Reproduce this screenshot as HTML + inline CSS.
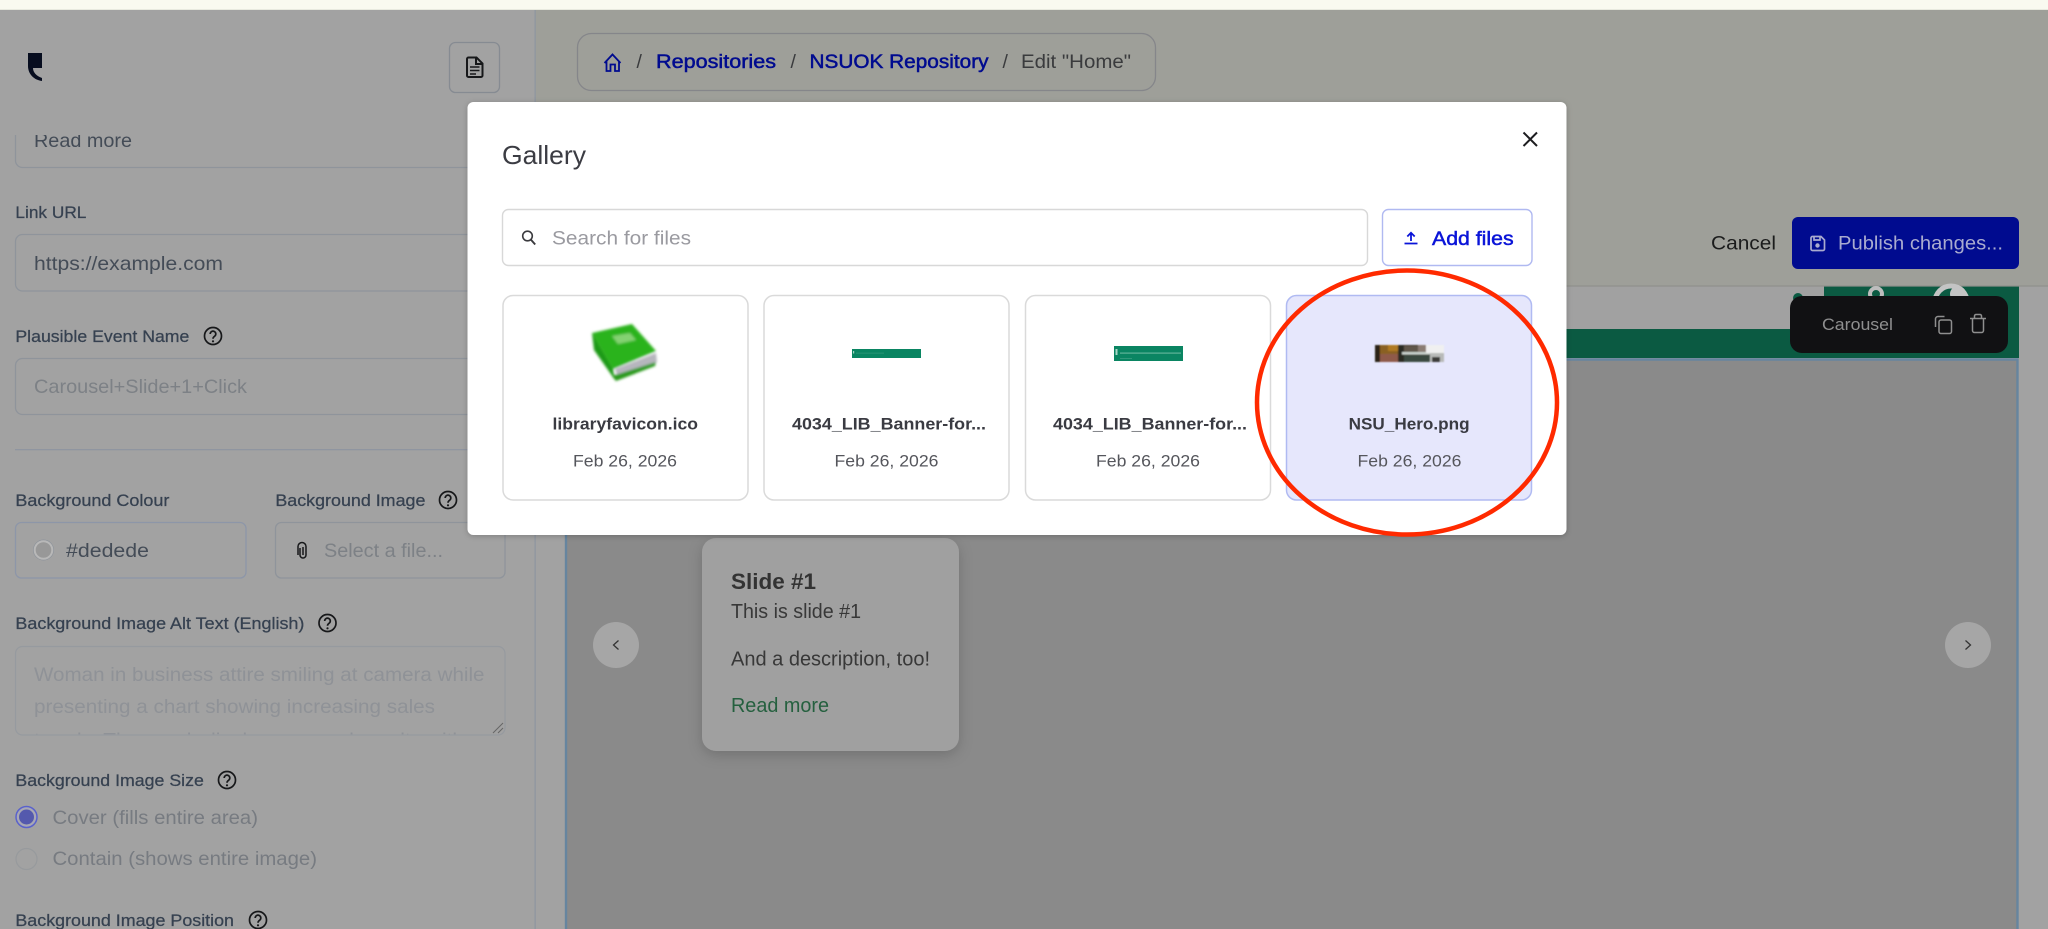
<!DOCTYPE html>
<html lang="en">
<head>
<meta charset="utf-8">
<title>Gallery</title>
<style>
html,body{margin:0;padding:0;background:#a2a2a2;overflow:hidden}
svg{display:block}
text{font-family:"Liberation Sans",Arial,sans-serif}
.lb{font-size:17px;fill:#364150;stroke:#364150;stroke-width:.25}
.in{font-size:19.500px;fill:#444c57}
.ph{font-size:19.500px;fill:#7d8186}
.ph2{font-size:19.500px;fill:#8f9297}
.rd{font-size:19.500px;fill:#777b81}
.bc{font-size:19.500px;fill:#000b8f;stroke:#000b8f;stroke-width:.5}
.sl{font-size:19.500px;fill:#3a3b3d}
.fn{font-size:16.500px;font-weight:bold;fill:#3a3b42}
.dt{font-size:17px;fill:#55565c}
.bx{fill:none;stroke:#8f949b;stroke-width:1.300}
.h{fill:none;stroke:#17181a;stroke-width:1.700}
</style>
</head>
<body>
<svg xmlns="http://www.w3.org/2000/svg" width="2048" height="929" viewBox="0 0 2048 929">
<defs>
<clipPath id="sb"><rect x="0" y="135" width="535" height="794"/></clipPath>
<clipPath id="ta"><rect x="15" y="646" width="490" height="89"/></clipPath>
<filter id="b1" x="-20%" y="-20%" width="140%" height="140%"><feGaussianBlur stdDeviation="1.400"/></filter>
<filter id="b2" x="-10%" y="-10%" width="120%" height="120%"><feGaussianBlur stdDeviation=".7"/></filter>
<filter id="sh" x="-20%" y="-20%" width="140%" height="140%"><feDropShadow dx="0" dy="4" stdDeviation="7" flood-color="#000" flood-opacity=".18"/></filter>
<filter id="sm" x="-5%" y="-5%" width="110%" height="110%"><feDropShadow dx="0" dy="1" stdDeviation="3" flood-color="#000" flood-opacity=".22"/></filter>
</defs>

<!-- page backgrounds -->
<rect width="2048" height="929" fill="#a2a2a2"/>
<rect x="535" y="10" width="1513" height="276" fill="#9e9f99"/>
<rect x="0" y="0" width="2048" height="10" fill="#f9faf0"/>
<rect x="0" y="9" width="2048" height="1" fill="#e8eadf"/>
<rect x="534.500" y="10" width="1.200" height="919" fill="#8d95a0"/>

<!-- main preview -->
<rect x="536" y="286" width="1512" height="643" fill="#a2a2a2"/>
<rect x="566" y="286" width="1258" height="43" fill="#a1a1a1"/>
<rect x="1824" y="286" width="195" height="43" fill="#0b5a42"/>
<rect x="566" y="329" width="1453" height="29" fill="#0b5a42"/>
<rect x="535" y="285.400" width="1513" height="1.200" fill="#8f908c"/>
<circle cx="1798" cy="298" r="5" fill="#0b5a42"/>
<circle cx="1876" cy="294" r="6" fill="none" stroke="#bdbdbd" stroke-width="4"/>
<circle cx="1951" cy="302" r="16" fill="none" stroke="#c4c4c4" stroke-width="5"/>
<circle cx="1958" cy="294" r="8" fill="#c4c4c4"/>
<rect x="566" y="359" width="1452" height="570" fill="#8a8a8a"/>
<path d="M566 929V359.500H2017.500V929" fill="none" stroke="#66859f" stroke-width="2.400"/>

<!-- slide card -->
<rect x="702" y="538" width="257" height="213" rx="14" fill="#a0a0a0" filter="url(#sh)"/>
<text x="731" y="589" font-size="22" font-weight="bold" fill="#333" textLength="85" lengthAdjust="spacingAndGlyphs">Slide #1</text>
<text x="731" y="618" font-size="20" fill="#383838" textLength="130" lengthAdjust="spacingAndGlyphs">This is slide #1</text>
<text x="731" y="665.500" font-size="20" fill="#383838" textLength="199" lengthAdjust="spacingAndGlyphs">And a description, too!</text>
<text x="731" y="712" font-size="20" fill="#25603f" textLength="98" lengthAdjust="spacingAndGlyphs">Read more</text>
<circle cx="616" cy="645" r="23" fill="#a6a6a6"/>
<path d="M618.500 640.500l-5 4.500 5 4.500" fill="none" stroke="#333" stroke-width="1.300"/>
<circle cx="1968" cy="645" r="23" fill="#a6a6a6"/>
<path d="M1965.500 640.500l5 4.500-5 4.500" fill="none" stroke="#333" stroke-width="1.300"/>

<!-- toolbar -->
<rect x="1790" y="296" width="218" height="57" rx="12" fill="#111113"/>
<text x="1822" y="330" font-size="17" fill="#8f8f8f" textLength="71" lengthAdjust="spacingAndGlyphs">Carousel</text>
<g fill="none" stroke="#8f8f8f" stroke-width="1.500">
<rect x="1939" y="320" width="12.500" height="13.500" rx="2"/>
<path d="M1935.500 327v-8a2.500 2.500 0 0 1 2.500-2.500h6.500"/>
<path d="M1970 318.500h16M1974.500 318v-2a1.500 1.500 0 0 1 1.500-1.500h4a1.500 1.500 0 0 1 1.500 1.500v2M1972.500 319v11.500a2 2 0 0 0 2 2h7a2 2 0 0 0 2-2V319"/>
</g>

<!-- header -->
<rect x="577.500" y="33.500" width="578" height="57" rx="14" fill="none" stroke="#85868a" stroke-width="1.300"/>
<path d="M604.500 63l8-8.500 8 8.500M606.500 61v10h4v-6.500h4.500V71h4V61" fill="none" stroke="#000b8f" stroke-width="1.800"/>
<text x="636.500" y="68" class="sl">/</text>
<text x="656" y="68" class="bc" textLength="120" lengthAdjust="spacingAndGlyphs">Repositories</text>
<text x="790.500" y="68" class="sl">/</text>
<text x="809.500" y="68" class="bc" textLength="179" lengthAdjust="spacingAndGlyphs">NSUOK Repository</text>
<text x="1002.500" y="68" class="sl">/</text>
<text x="1021" y="68" class="sl" textLength="110" lengthAdjust="spacingAndGlyphs">Edit "Home"</text>

<text x="1711" y="249.500" font-size="19.500" fill="#1b1c1c" textLength="65" lengthAdjust="spacingAndGlyphs">Cancel</text>
<rect x="1792" y="217" width="227" height="52" rx="6" fill="#000b8f"/>
<g fill="none" stroke="#a9abcf" stroke-width="1.700">
<path d="M1811 238a1.500 1.500 0 0 1 1.500-1.500h8.500l3.500 3.500v9a1.500 1.500 0 0 1-1.500 1.500h-10.500a1.500 1.500 0 0 1-1.500-1.500z"/>
<path d="M1814 236.500v3.500h6v-3.500"/>
</g>
<circle cx="1817.500" cy="245.500" r="2.200" fill="#a9abcf"/>
<text x="1838" y="249.500" font-size="19.500" fill="#a9abcf" textLength="165" lengthAdjust="spacingAndGlyphs">Publish changes...</text>

<!-- sidebar -->
<rect x="0" y="10" width="534" height="125" fill="#a2a2a2"/>
<path d="M28 53H42V68H33C33 72 36 76 42 78V81C34 80 28 74 28 66Z" fill="#070d1f"/>
<rect x="449.500" y="42.500" width="50" height="50" rx="6" fill="none" stroke="#868b92" stroke-width="1.300"/>
<path d="M467 59a1.500 1.500 0 0 1 1.500-1.500h8l6 6v12a1.500 1.500 0 0 1-1.500 1.500h-12.500a1.500 1.500 0 0 1-1.500-1.500zM476 58v6h6" fill="none" stroke="#17181a" stroke-width="2"/>
<path d="M470 67h9.500M470 70.500h9.500M470 74h6" stroke="#17181a" stroke-width="1.600"/>

<g clip-path="url(#sb)">
<rect class="bx" x="15.500" y="110" width="489.500" height="57.500" rx="7"/>
<text class="in" x="34" y="147" textLength="98" lengthAdjust="spacingAndGlyphs">Read more</text>
</g>

<text class="lb" x="15.400" y="218" textLength="71" lengthAdjust="spacingAndGlyphs">Link URL</text>
<rect class="bx" x="15.500" y="234.500" width="489.500" height="56.500" rx="7"/>
<text class="in" x="34" y="270" textLength="189" lengthAdjust="spacingAndGlyphs">https://example.com</text>

<text class="lb" x="15.400" y="342" textLength="174" lengthAdjust="spacingAndGlyphs">Plausible Event Name</text>
<g transform="translate(213 336)"><circle class="h" r="8.500"/><path class="h" d="M-2.800-2a2.800 2.800 0 1 1 4.300 2.300C.5 1 0 1.500 0 2.800"/><circle cy="5.300" r="1.100" fill="#17181a"/></g>
<rect class="bx" x="15.500" y="358.500" width="489.500" height="56" rx="7"/>
<text class="ph" x="34" y="393" textLength="213" lengthAdjust="spacingAndGlyphs">Carousel+Slide+1+Click</text>

<rect x="15" y="449" width="505" height="1.300" fill="#8f95a0"/>

<text class="lb" x="15.400" y="506" textLength="154" lengthAdjust="spacingAndGlyphs">Background Colour</text>
<text class="lb" x="275.400" y="506" textLength="150" lengthAdjust="spacingAndGlyphs">Background Image</text>
<g transform="translate(448 500)"><circle class="h" r="8.500"/><path class="h" d="M-2.800-2a2.800 2.800 0 1 1 4.300 2.300C.5 1 0 1.500 0 2.800"/><circle cy="5.300" r="1.100" fill="#17181a"/></g>
<rect x="15.500" y="522.500" width="230.500" height="55.500" rx="6" fill="none" stroke="#8d96a8" stroke-width="1.300"/>
<circle cx="43.500" cy="550" r="8.800" fill="#989898" stroke="#b8b8b8" stroke-width="2"/>
<circle cx="43.500" cy="550" r="10.200" fill="none" stroke="#8e949c" stroke-width=".6"/>
<text class="in" x="66" y="557" textLength="83" lengthAdjust="spacingAndGlyphs">#dedede</text>
<rect class="bx" x="275.500" y="522.500" width="229.500" height="55.500" rx="6"/>
<path d="M300 548v7a3 3 0 0 0 6 0v-8.500a4 4 0 0 0-8 0V555M303 547v8" fill="none" stroke="#17181a" stroke-width="1.500"/>
<text class="ph" x="324" y="557" textLength="119" lengthAdjust="spacingAndGlyphs">Select a file...</text>

<text class="lb" x="15.400" y="629" textLength="289" lengthAdjust="spacingAndGlyphs">Background Image Alt Text (English)</text>
<g transform="translate(327.500 623)"><circle class="h" r="8.500"/><path class="h" d="M-2.800-2a2.800 2.800 0 1 1 4.300 2.300C.5 1 0 1.500 0 2.800"/><circle cy="5.300" r="1.100" fill="#17181a"/></g>
<g clip-path="url(#ta)">
<text class="ph2" x="34" y="681" textLength="450.500" lengthAdjust="spacingAndGlyphs">Woman in business attire smiling at camera while</text>
<text class="ph2" x="34" y="713" textLength="401" lengthAdjust="spacingAndGlyphs">presenting a chart showing increasing sales</text>
<text class="ph2" x="34" y="746.500" textLength="430" lengthAdjust="spacingAndGlyphs">trends. The graph displays upward results with</text>
</g>
<rect x="15.500" y="646.500" width="489.500" height="88.500" rx="7" fill="none" stroke="#969a9f" stroke-width="1.200"/>
<path d="M493 733l10-10M498 733l5-5" stroke="#666" stroke-width="1"/>

<text class="lb" x="15.400" y="786" textLength="188.500" lengthAdjust="spacingAndGlyphs">Background Image Size</text>
<g transform="translate(227 780)"><circle class="h" r="8.500"/><path class="h" d="M-2.800-2a2.800 2.800 0 1 1 4.300 2.300C.5 1 0 1.500 0 2.800"/><circle cy="5.300" r="1.100" fill="#17181a"/></g>
<circle cx="26.500" cy="817" r="10.500" fill="#a8a8b4" stroke="#5a62cc" stroke-width="1.500"/>
<circle cx="26.500" cy="817" r="7.500" fill="#5459ad"/>
<text class="rd" x="52.500" y="824" textLength="205.500" lengthAdjust="spacingAndGlyphs">Cover (fills entire area)</text>
<circle cx="26.500" cy="859" r="10.500" fill="none" stroke="#979a9d" stroke-width="1.200"/>
<text class="rd" x="52.500" y="865" textLength="264.500" lengthAdjust="spacingAndGlyphs">Contain (shows entire image)</text>

<text class="lb" x="15.400" y="926" textLength="218.600" lengthAdjust="spacingAndGlyphs">Background Image Position</text>
<g transform="translate(258 920)"><circle class="h" r="8.500"/><path class="h" d="M-2.800-2a2.800 2.800 0 1 1 4.300 2.300C.5 1 0 1.500 0 2.800"/><circle cy="5.300" r="1.100" fill="#17181a"/></g>

<!-- modal -->
<rect x="467.500" y="102" width="1099" height="433" rx="6" fill="#fff" filter="url(#sm)"/>
<text x="502" y="164" font-size="26" fill="#3b3c43" textLength="84" lengthAdjust="spacingAndGlyphs">Gallery</text>
<path d="M1523.500 132.500l13.500 13.500M1537 132.500l-13.500 13.500" stroke="#1d1d20" stroke-width="2" fill="none"/>

<rect x="502.500" y="209.500" width="865" height="56" rx="6" fill="#fff" stroke="#d8d8d8" stroke-width="1.400"/>
<circle cx="527.500" cy="236" r="4.800" fill="none" stroke="#3a3a3e" stroke-width="1.600"/>
<path d="M531 239.800l4.200 4.700" stroke="#3a3a3e" stroke-width="1.900"/>
<text x="552" y="244.500" font-size="19.500" fill="#9a9aa0" textLength="139" lengthAdjust="spacingAndGlyphs">Search for files</text>

<rect x="1382.500" y="209.500" width="149.500" height="56" rx="6" fill="#fff" stroke="#b0b9f1" stroke-width="1.400"/>
<path d="M1411 241v-8M1407.300 236.500l3.700-3.700 3.700 3.700M1404.500 243.500h13" fill="none" stroke="#0a14d8" stroke-width="1.800"/>
<text x="1432" y="245" font-size="19.500" fill="#0a14d8" stroke="#0a14d8" stroke-width=".5" textLength="81.600" lengthAdjust="spacingAndGlyphs">Add files</text>

<!-- cards -->
<rect x="503" y="295.500" width="245" height="204.500" rx="10" fill="#fff" stroke="#dadada" stroke-width="1.500"/>
<rect x="764" y="295.500" width="245" height="204.500" rx="10" fill="#fff" stroke="#dadada" stroke-width="1.500"/>
<rect x="1025.500" y="295.500" width="245" height="204.500" rx="10" fill="#fff" stroke="#dadada" stroke-width="1.500"/>
<rect x="1286.500" y="295.500" width="245" height="204.500" rx="10" fill="#e6e7fc" stroke="#b0baf2" stroke-width="1.500"/>

<!-- book thumb -->
<g filter="url(#b1)">
<polygon points="592,333 632,324 656,351 613,369" fill="#2cb31a"/>
<polygon points="592,333 613,369 615,380 594,350" fill="#1f9a12"/>
<polygon points="615,369 656,353 657,362 617,375" fill="#b6b6bd"/>
<polygon points="612,376 656,362 655,366 616,381" fill="#2a9a1a"/>
<polygon points="612,336 630,333 636,340 618,344" fill="#84d272"/>
</g>

<!-- banner thumbs -->
<rect x="852" y="349" width="69" height="9" fill="#0a8562"/>
<rect x="853" y="351" width="1.200" height="2.500" fill="#9fd2c0"/>
<rect x="856" y="352.800" width="28" height=".6" fill="#3a9d80"/>
<rect x="1114" y="346" width="69" height="15" fill="#0a8562"/>
<rect x="1115.500" y="349" width="2" height="6" fill="#a8d6c6"/>
<rect x="1120" y="352.500" width="61" height="1.200" fill="#5fb49a"/>
<rect x="1120" y="358" width="12" height=".8" fill="#3a9d80"/>

<!-- hero thumb -->
<g filter="url(#b2)">
<rect x="1375" y="345" width="69" height="17" fill="#3f3428"/>
<rect x="1375" y="345" width="5" height="17" fill="#2a2416"/>
<rect x="1380" y="345" width="18" height="9" fill="#8a6020"/>
<rect x="1380" y="354" width="18" height="8" fill="#8f5a48"/>
<rect x="1388" y="345" width="12" height="6" fill="#b07a20"/>
<rect x="1398" y="345" width="6" height="17" fill="#2c2a20"/>
<rect x="1404" y="346" width="14" height="6" fill="#60564a"/>
<rect x="1402" y="352" width="38" height="2.500" fill="#c8d0cb"/>
<rect x="1404" y="355" width="26" height="7" fill="#3a4840"/>
<rect x="1418" y="345" width="8" height="7" fill="#8a7c72"/>
<rect x="1426" y="345" width="18" height="8" fill="#f0f0f0"/>
<rect x="1430" y="353" width="14" height="9" fill="#b8bab8"/>
<rect x="1432" y="357" width="8" height="5" fill="#3a3a38"/>
</g>

<!-- file labels -->
<text class="fn" x="552.500" y="429.700" textLength="145.500" lengthAdjust="spacingAndGlyphs">libraryfavicon.ico</text>
<text class="dt" x="573" y="466.700" textLength="104" lengthAdjust="spacingAndGlyphs">Feb 26, 2026</text>
<text class="fn" x="792" y="429.700" textLength="194" lengthAdjust="spacingAndGlyphs">4034_LIB_Banner-for...</text>
<text class="dt" x="834.500" y="466.700" textLength="104" lengthAdjust="spacingAndGlyphs">Feb 26, 2026</text>
<text class="fn" x="1053" y="429.700" textLength="194" lengthAdjust="spacingAndGlyphs">4034_LIB_Banner-for...</text>
<text class="dt" x="1096" y="466.700" textLength="104" lengthAdjust="spacingAndGlyphs">Feb 26, 2026</text>
<text class="fn" x="1348.600" y="429.700" textLength="121" lengthAdjust="spacingAndGlyphs">NSU_Hero.png</text>
<text class="dt" x="1357.500" y="466.700" textLength="104" lengthAdjust="spacingAndGlyphs">Feb 26, 2026</text>

<!-- annotation -->
<ellipse cx="1407" cy="402.500" rx="150" ry="132" fill="none" stroke="#ff2a00" stroke-width="4.500"/>
</svg>
</body>
</html>
